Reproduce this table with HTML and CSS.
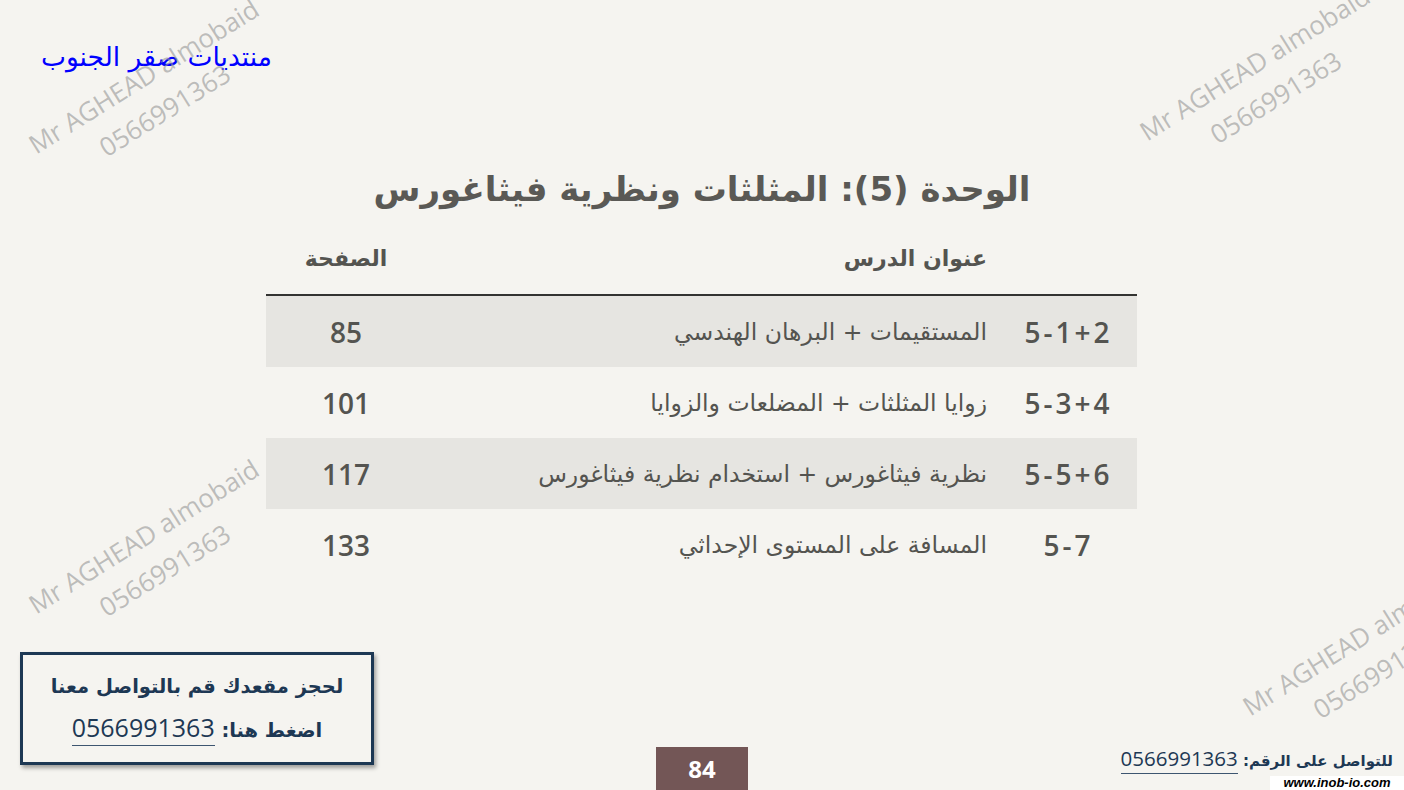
FILE: index.html
```html
<!DOCTYPE html>
<html lang="ar">
<head>
<meta charset="utf-8">
<link rel="stylesheet" href="styles.css">
</head>
<body>
<div class="slide">
  <div class="forum">منتديات صقر الجنوب</div>

  <h1 class="title">الوحدة (5): المثلثات ونظرية فيثاغورس</h1>

  <div class="table">
    <div class="row head">
      <div class="c-num"></div>
      <div class="c-title">عنوان الدرس</div>
      <div class="c-page">الصفحة</div>
    </div>
    <div class="row shade">
      <div class="c-num num">5-1+2</div>
      <div class="c-title">المستقيمات + البرهان الهندسي</div>
      <div class="c-page num">85</div>
    </div>
    <div class="row">
      <div class="c-num num">5-3+4</div>
      <div class="c-title">زوايا المثلثات + المضلعات والزوايا</div>
      <div class="c-page num">101</div>
    </div>
    <div class="row shade">
      <div class="c-num num">5-5+6</div>
      <div class="c-title">نظرية فيثاغورس + استخدام نظرية فيثاغورس</div>
      <div class="c-page num">117</div>
    </div>
    <div class="row">
      <div class="c-num num">5-7</div>
      <div class="c-title">المسافة على المستوى الإحداثي</div>
      <div class="c-page num">133</div>
    </div>
  </div>

  <div class="footer">
    <div class="book-box">
      <div class="book-line">لحجز مقعدك قم بالتواصل معنا</div>
      <div class="book-line">اضغط هنا: <span class="phone">0566991363</span></div>
    </div>
    <div class="page-no">84</div>
    <div class="contact">
      <div class="contact-line">للتواصل على الرقم: <span class="phone">0566991363</span></div>
      <div class="site">www.inob-io.com</div>
    </div>
  </div>

  <div class="wm wm-tl"><div>Mr AGHEAD almobaid</div><div>0566991363</div></div>
  <div class="wm wm-tr"><div>Mr AGHEAD almobaid</div><div>0566991363</div></div>
  <div class="wm wm-ml"><div>Mr AGHEAD almobaid</div><div>0566991363</div></div>
  <div class="wm wm-br"><div>Mr AGHEAD almobaid</div><div>0566991363</div></div>
</div>
</body>
</html>
```

FILE: styles.css
```css
html, body {
  margin: 0;
  padding: 0;
}
body {
  background: #f5f4f0;
  font-family: "DejaVu Sans", sans-serif;
}
.slide {
  position: relative;
  width: 1404px;
  height: 790px;
  overflow: hidden;
  background: #f5f4f0;
  display: flex;
  flex-direction: column;
}
.forum {
  direction: rtl;
  align-self: flex-start;
  margin: 42px 0 0 42px;
  width: 230px;
  text-align: right;
  color: #0000ff;
  font-family: "DejaVu Sans", sans-serif;
  font-size: 26.5px;
  line-height: 30px;
  white-space: nowrap;
}
.title {
  direction: rtl;
  margin: 94px 0 0 0;
  text-align: center;
  color: #5a5955;
  font-size: 34px;
  font-weight: bold;
  line-height: 46px;
}
.table {
  direction: rtl;
  margin: 24px 0 0 266px;
  width: 871px;
  display: flex;
  flex-direction: column;
}
.row {
  display: grid;
  grid-template-columns: 137px 1fr 160px;
  align-items: center;
  height: 71px;
  color: #545450;
}
.row.head {
  height: 58px;
  border-bottom: 2px solid #333331;
  align-items: start;
}
.row.head > div {
  font-weight: bold;
  font-size: 22px;
  padding-top: 10px;
}
.row.shade {
  background: #e6e5e1;
}
.c-num {
  text-align: center;
  font-family: "Open Sans", sans-serif;
  font-weight: 600;
  font-size: 28px;
  letter-spacing: 3px;
  direction: ltr;
}
.c-title {
  padding-right: 13px;
  font-size: 23.5px;
  text-align: right;
}
.c-page {
  text-align: center;
  font-size: 22px;
}
.c-page.num {
  font-family: "Open Sans", sans-serif;
  font-weight: 600;
  font-size: 28px;
}
.footer {
  margin-top: auto;
  display: flex;
  align-items: flex-end;
  padding: 0 0 0 20px;
}
.book-box {
  direction: rtl;
  box-sizing: border-box;
  width: 354px;
  height: 113px;
  margin-bottom: 25px;
  border: 3px solid #1d3854;
  box-shadow: 2px 3px 4px rgba(0, 0, 0, 0.35);
  color: #1d3854;
  display: flex;
  flex-direction: column;
  align-items: center;
  justify-content: center;
  gap: 6px;
}
.book-line {
  font-weight: bold;
  font-size: 19.5px;
  line-height: 34px;
}
.phone {
  font-family: "Open Sans", sans-serif;
  font-weight: normal;
  font-size: 25px;
  border-bottom: 1px solid #3d5570;
  padding-bottom: 1px;
}
.page-no {
  width: 92px;
  height: 43px;
  margin-left: 282px;
  background: #735656;
  color: #ffffff;
  font-family: "Open Sans", sans-serif;
  font-weight: bold;
  font-size: 24px;
  display: flex;
  align-items: center;
  justify-content: center;
}
.contact {
  margin-left: auto;
  display: flex;
  flex-direction: column;
  align-items: flex-end;
  width: 290px;
}
.contact-line {
  direction: rtl;
  padding-right: 11px;
  color: #1d3854;
  font-weight: bold;
  font-size: 15px;
  line-height: 26px;
  white-space: nowrap;
}
.contact-line .phone {
  font-size: 20.5px;
}
.site {
  margin-top: 2px;
  width: 134px;
  height: 14px;
  background: #ffffff;
  color: #000000;
  font-family: "Liberation Sans", sans-serif;
  font-weight: bold;
  font-style: italic;
  font-size: 13px;
  line-height: 14px;
  text-align: center;
}
.wm {
  position: absolute;
  transform: translate(-50%, -50%) rotate(-32deg);
  color: rgba(150, 150, 150, 0.6);
  font-family: "Open Sans", sans-serif;
  font-size: 26px;
  line-height: 40px;
  text-align: center;
  white-space: nowrap;
  pointer-events: none;
}
.wm-tl { left: 154px; top: 93px; }
.wm-tr { left: 1265px; top: 80px; }
.wm-ml { left: 154px; top: 553px; }
.wm-br { left: 1368px; top: 655px; }
```
